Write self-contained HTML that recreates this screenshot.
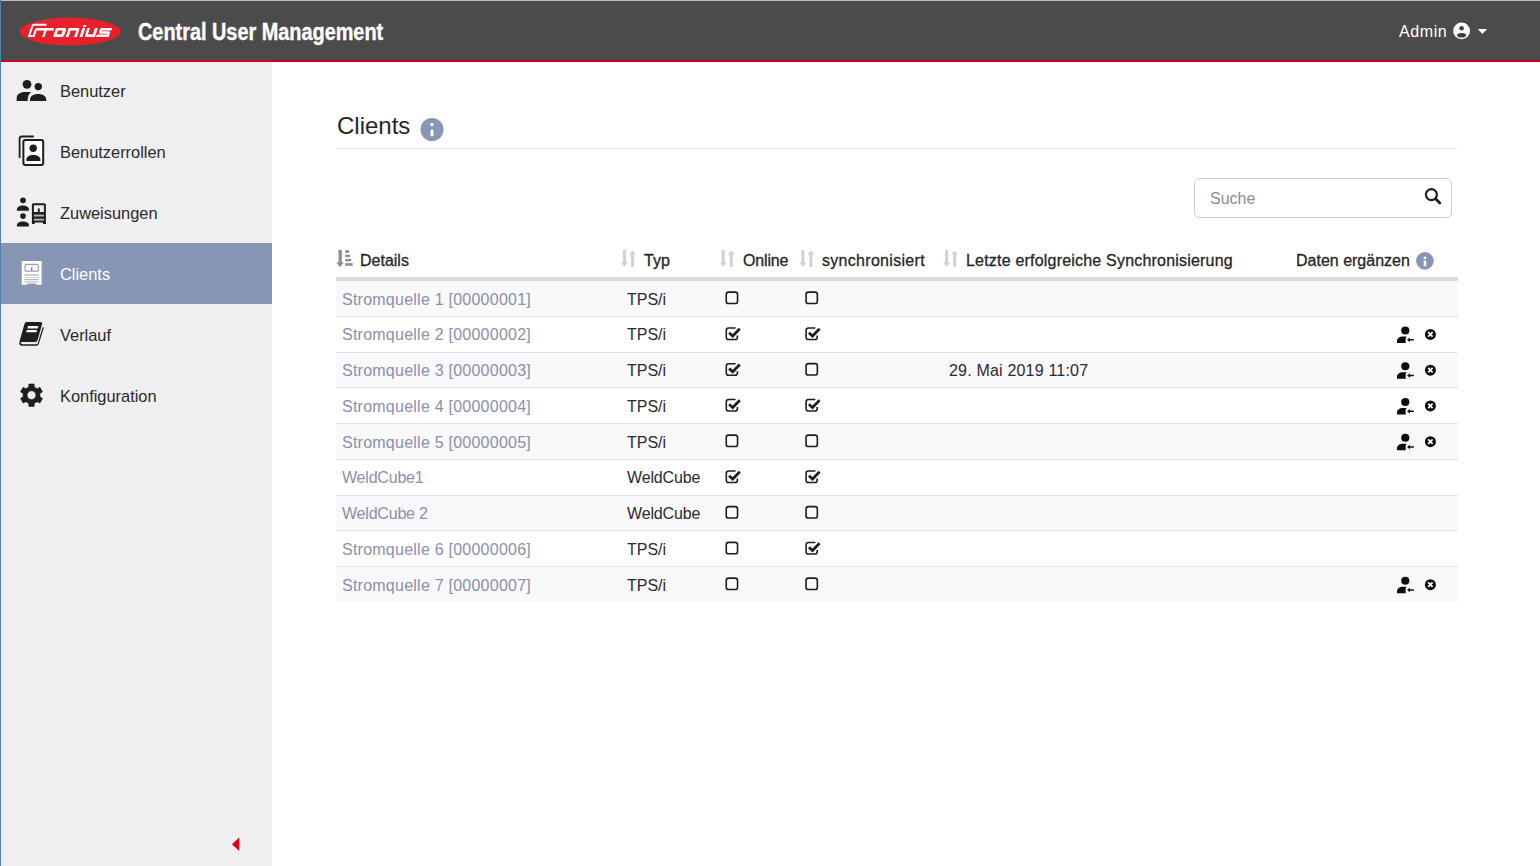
<!DOCTYPE html>
<html><head><meta charset="utf-8">
<style>
*{margin:0;padding:0;box-sizing:border-box}
html,body{width:1540px;height:866px;overflow:hidden;background:#fff;font-family:"Liberation Sans",sans-serif;color:#2b2b2b}
.abs{position:absolute}
.t{position:absolute;white-space:nowrap;line-height:1}
svg{position:absolute;overflow:visible}
.navtext{position:absolute;left:60px;font-size:16.4px;line-height:20px;color:#2a2a2a;white-space:nowrap}
.title{left:138px;top:19px;font-size:23px;font-weight:bold;color:#fff;white-space:nowrap;line-height:normal;transform-origin:0 0;transform:scaleX(0.864);-webkit-text-stroke:0.4px #fff}
.hdr{font-size:16px;color:#262626;-webkit-text-stroke:0.3px #262626}
.row{position:absolute;left:336px;width:1122px}
.odd{background:#f9f8fa}
.sep{position:absolute;left:336px;width:1122px;height:1px;background:#e2e1e5}
.lnk{color:#8a91a8;font-size:16px}
.cell{color:#2b2b2b;font-size:16px}
</style></head>
<body>
<div class="abs" style="left:0;top:0;width:1540px;height:1px;background:#bdbdbd"></div>
<div class="abs" style="left:0;top:1px;width:1540px;height:59px;background:#4b4b4c"></div>
<div class="abs" style="left:0;top:60px;width:1540px;height:2px;background:#c9061c"></div>
<div class="abs" style="left:0;top:62px;width:272px;height:804px;background:#efeef0"></div>
<div class="abs" style="left:0;top:243px;width:272px;height:61px;background:#8796b4"></div>
<div class="abs" style="left:0;top:0;width:1px;height:866px;background:#4f83ad"></div>
<svg style="left:0;top:0" width="130" height="60" viewBox="0 0 130 60">
<ellipse cx="70" cy="31.6" rx="50.5" ry="14" fill="#e8202a"/>
<g fill="#fff" transform="matrix(1,0,-0.33,1,12.21,0)">
<path d="M27.7 37 V25.8 Q27.7 23.8 29.7 23.8 H42.4 V25.8 H29.8 V35.1 H34.4 V37 Z"/>
<path d="M32.3 37 V30 Q32.3 28 34.3 28 H51.2 V30.4 H44.5 V37 H42.1 V30.4 H34.5 V37 Z"/>
<path fill-rule="evenodd" d="M55 28 H61.6 Q63.7 28 63.7 30.1 V34.9 Q63.7 37 61.6 37 H55 Q52.9 37 52.9 34.9 V30.1 Q52.9 28 55 28 Z M56 30.6 V34.3 H60.6 V30.6 Z"/>
<path d="M65.7 37 V28 H74.8 Q76.9 28 76.9 30.1 V37 H74.1 V30.6 H68.5 V37 Z"/>
<rect x="79.5" y="28" width="2.8" height="9"/>
<rect x="79.6" y="25.1" width="2.8" height="1.9"/>
<path d="M84.4 28 H87 V34.3 H92 V28 H94.9 V37 H86.5 Q84.4 37 84.4 34.9 Z"/>
<path d="M109.2 28 V30.4 H99.8 V31.3 H106.5 Q108.6 31.3 108.6 33.4 V37 H96 V34.6 H106 V33.7 H99.3 Q97.2 33.7 97.2 31.6 V30.1 Q97.2 28 99.3 28 Z"/>
</g>
</svg>
<div class="abs title">Central User Management</div>
<div class="t" style="left:1399px;top:24px;font-size:16px;color:#fff;letter-spacing:0.6px">Admin</div>
<svg style="left:1453px;top:22px" width="18" height="18" viewBox="0 0 18 18">
<circle cx="8.6" cy="8.9" r="8.4" fill="#fff"/>
<circle cx="8.6" cy="6.2" r="2.3" fill="#3a3f4a"/>
<ellipse cx="8.6" cy="13.2" rx="4.4" ry="2.3" fill="#3a3f4a"/>
</svg>
<svg style="left:1477px;top:28px" width="11" height="7" viewBox="0 0 11 7"><path d="M0.8 0.9 H10 L5.4 5.9 Z" fill="#fff"/></svg>
<div class="navtext" style="top:81px">Benutzer</div>
<div class="navtext" style="top:142px">Benutzerrollen</div>
<div class="navtext" style="top:203px">Zuweisungen</div>
<div class="navtext" style="top:264px;color:#fff">Clients</div>
<div class="navtext" style="top:325px">Verlauf</div>
<div class="navtext" style="top:386px">Konfiguration</div>
<svg style="left:0;top:0" width="60" height="430" viewBox="0 0 60 430">
<g fill="#1e1e1e">
<circle cx="27" cy="84.3" r="4.4"/>
<circle cx="38.3" cy="86.6" r="3.7"/>
<path d="M16.7 101 V98 C16.7 94.5 20 92 25 92 L31 92 C28.6 94 27.6 97 27.6 101 Z"/>
<path d="M30 101 V99.5 C30 96.2 33.5 94 38.1 94 C42.7 94 46.2 96.2 46.2 99.5 V101 Z"/>
</g>
<!-- Benutzerrollen -->
<g fill="none" stroke="#1e1e1e">
<path d="M19.6 158 V138.6 Q19.6 136.5 21.7 136.5 H33.8" stroke-width="1.8"/>
<rect x="23.4" y="140" width="19.8" height="25" rx="2" stroke-width="2" fill="#fff"/>
</g>
<g fill="#1e1e1e">
<circle cx="33.2" cy="148.3" r="3.7"/>
<path d="M26.3 161 V159.5 C26.3 156.8 29.3 155 33.3 155 C37.3 155 40.4 156.8 40.4 159.5 V161 Z"/>
</g>
<!-- Zuweisungen -->
<g fill="#1e1e1e">
<circle cx="23" cy="200.3" r="2.9"/>
<path d="M16.9 210.7 V209.5 C16.9 207.2 19.5 205.6 22.9 205.6 C26.3 205.6 28.9 207.2 28.9 209.5 V210.7 Z"/>
<circle cx="23" cy="216.1" r="2.8"/>
<path d="M16.9 226.4 V225.2 C16.9 222.9 19.5 221.6 22.9 221.6 C26.3 221.6 28.9 222.9 28.9 225.2 V226.4 Z"/>
<path fill-rule="evenodd" d="M33.4 203.3 H44.4 Q45.9 203.3 45.9 204.8 V223.9 H43 V222.6 H34.8 V223.9 H31.9 V204.8 Q31.9 203.3 33.4 203.3 Z M33.9 205.3 V211.9 H43.9 V205.3 Z"/>
<rect x="33.9" y="214.6" width="10" height="1.9" fill="#b8b8b8"/>
<rect x="33.9" y="218.7" width="10" height="1.9" fill="#b8b8b8"/>
<rect x="37.8" y="208.5" width="2" height="3.4"/>
</g>
<!-- Clients (white) -->
<g>
<path d="M21.7 260.9 H41.6 V284.7 H36 V283.5 H27.2 V284.7 H21.7 Z" fill="#fff"/>
<rect x="25" y="264.4" width="13.3" height="6.8" rx="1" fill="#fff" stroke="#9aa3b8" stroke-width="1.2"/>
<rect x="31" y="267.6" width="1.4" height="3" fill="#6f7890"/>
<rect x="24.5" y="274.3" width="14.3" height="1.4" fill="#b3b8c8"/>
<rect x="24.5" y="277" width="14.3" height="0.9" fill="#c3c8d4"/>
<rect x="24.5" y="279.2" width="14.3" height="0.9" fill="#a0a6b8"/>
<rect x="24.5" y="281" width="14.3" height="1.4" fill="#c3c8d4"/>
</g>
<!-- Verlauf book -->
<g fill="#1e1e1e">
<path d="M26.5 322 H40.3 Q42.6 322 42 324.3 L37.6 340.2 Q37.1 342 35.2 342 H20.2 Q19.4 342 19.6 341 L24.6 323.5 Q25 322 26.5 322 Z"/>
<path d="M19.6 341.5 Q18.6 345.8 22 345.8 H36.5 Q38.3 345.8 38.8 344 L43.9 327.5 L42.6 327.2 L37.8 343.3 Q37.5 344.2 36.4 344.2 H22.3 Q20.8 344.2 21.2 342.6 Z"/>
</g>
<g fill="#fff">
<path d="M28 326.1 H38.3 L37.7 328.4 H27.4 Z"/>
<path d="M26.8 330 H37 L36.4 332.3 H26.2 Z"/>
</g>
</svg>
<svg style="left:0;top:0" width="60" height="430" viewBox="0 0 60 430"><path d="M28.70 387.07 L28.91 383.99 L34.09 383.99 L34.30 387.07 L37.14 388.71 L39.91 387.36 L42.50 391.84 L39.94 393.56 L39.94 396.84 L42.50 398.56 L39.91 403.04 L37.14 401.69 L34.30 403.33 L34.09 406.41 L28.91 406.41 L28.70 403.33 L25.86 401.69 L23.09 403.04 L20.50 398.56 L23.06 396.84 L23.06 393.56 L20.50 391.84 L23.09 387.36 L25.86 388.71 Z M35.90 395.2 A4.4 4.4 0 1 0 27.10 395.2 A4.4 4.4 0 1 0 35.90 395.2 Z" fill="#1e1e1e" fill-rule="evenodd" stroke="#1e1e1e" stroke-width="0.6" stroke-linejoin="round"/></svg>
<svg style="left:0;top:0" width="272" height="866" viewBox="0 0 272 866"><path d="M231.9 844.3 L239.3 837.5 V851 Z" fill="#d8001a"/></svg>
<div class="t" style="left:337px;top:114px;font-size:24px;color:#262626">Clients</div>
<svg style="left:420px;top:118px" width="24" height="24" viewBox="0 0 24 24"><circle cx="12" cy="11.5" r="11.5" fill="#8796b4"/><rect x="10.5" y="5" width="3" height="3" rx="0.6" fill="#fff"/><rect x="10.5" y="11.5" width="3" height="6.6" fill="#fff"/></svg>
<div class="abs" style="left:336px;top:148px;width:1122px;height:1px;background:#e9e8ec"></div>
<div class="abs" style="left:1194px;top:178px;width:258px;height:40px;border:1px solid #cdcdcd;border-radius:5px;background:#fff"></div>
<div class="t" style="left:1210px;top:191px;font-size:16px;color:#8c8c8c">Suche</div>
<svg style="left:1418px;top:183px" width="28" height="26" viewBox="0 0 28 26"><circle cx="13.4" cy="11.6" r="5.5" fill="none" stroke="#1e1e1e" stroke-width="2.2"/><path d="M17.6 15.8 L21.8 20" stroke="#1e1e1e" stroke-width="2.8" stroke-linecap="round"/></svg>
<div class="row odd" style="top:281px;height:35px"></div>
<div class="row" style="top:317px;height:35px"></div>
<div class="row odd" style="top:353px;height:34px"></div>
<div class="row" style="top:388px;height:35px"></div>
<div class="row odd" style="top:424px;height:35px"></div>
<div class="row" style="top:460px;height:35px"></div>
<div class="row odd" style="top:496px;height:34px"></div>
<div class="row" style="top:531px;height:35px"></div>
<div class="row odd" style="top:567px;height:35px"></div>
<div class="sep" style="top:316px"></div>
<div class="sep" style="top:352px"></div>
<div class="sep" style="top:387px"></div>
<div class="sep" style="top:423px"></div>
<div class="sep" style="top:459px"></div>
<div class="sep" style="top:495px"></div>
<div class="sep" style="top:530px"></div>
<div class="sep" style="top:566px"></div>
<div class="abs" style="left:336px;top:277px;width:1122px;height:4px;background:#dadada"></div>
<div class="t hdr" style="left:360px;top:253px;letter-spacing:0px">Details</div>
<div class="t hdr" style="left:644px;top:253px;letter-spacing:0px">Typ</div>
<div class="t hdr" style="left:743px;top:253px;letter-spacing:-0.15px">Online</div>
<div class="t hdr" style="left:822px;top:253px;letter-spacing:0.3px">synchronisiert</div>
<div class="t hdr" style="left:966px;top:253px;letter-spacing:0.2px">Letzte erfolgreiche Synchronisierung</div>
<div class="t hdr" style="left:1296px;top:253px;letter-spacing:0px">Daten ergänzen</div>
<svg style="left:0;top:0" width="1540" height="300" viewBox="0 0 1540 300">
<g fill="#8f8f8f">
<rect x="338.5" y="249.9" width="3.4" height="13.5"/>
<path d="M336.2 262.6 H343.9 L340.05 267 Z"/>
<rect x="345.2" y="250.2" width="3.9" height="2.7"/>
<rect x="345.2" y="254.7" width="4.8" height="2.4"/>
<rect x="345.2" y="258.9" width="6" height="2.4"/>
<rect x="345.2" y="263.1" width="7.5" height="2.7"/>
</g>
<g fill="#d2d2d2" transform="translate(0.0,0)">
<rect x="622.9" y="250" width="3.1" height="13"/>
<path d="M620.8 262.6 H628 L624.4 266.8 Z"/>
<rect x="631" y="254.5" width="3" height="12.5"/>
<path d="M629 254.8 H636 L632.5 250.4 Z"/>
</g>
<g fill="#d2d2d2" transform="translate(98.80000000000007,0)">
<rect x="622.9" y="250" width="3.1" height="13"/>
<path d="M620.8 262.6 H628 L624.4 266.8 Z"/>
<rect x="631" y="254.5" width="3" height="12.5"/>
<path d="M629 254.8 H636 L632.5 250.4 Z"/>
</g>
<g fill="#d2d2d2" transform="translate(178.4000000000001,0)">
<rect x="622.9" y="250" width="3.1" height="13"/>
<path d="M620.8 262.6 H628 L624.4 266.8 Z"/>
<rect x="631" y="254.5" width="3" height="12.5"/>
<path d="M629 254.8 H636 L632.5 250.4 Z"/>
</g>
<g fill="#d2d2d2" transform="translate(322.20000000000005,0)">
<rect x="622.9" y="250" width="3.1" height="13"/>
<path d="M620.8 262.6 H628 L624.4 266.8 Z"/>
<rect x="631" y="254.5" width="3" height="12.5"/>
<path d="M629 254.8 H636 L632.5 250.4 Z"/>
</g>
<circle cx="1424.9" cy="260.9" r="8.8" fill="#8796b4"/>
<rect x="1423.7" y="256.6" width="2.5" height="2.5" fill="#fff"/>
<rect x="1423.7" y="260.6" width="2.5" height="5.6" fill="#fff"/>
</svg>
<div class="t lnk" style="left:342px;top:292px;letter-spacing:0.24px">Stromquelle 1 [00000001]</div>
<div class="t cell" style="left:627px;top:292px;letter-spacing:0px">TPS/i</div>
<div class="t lnk" style="left:342px;top:327px;letter-spacing:0.24px">Stromquelle 2 [00000002]</div>
<div class="t cell" style="left:627px;top:327px;letter-spacing:0px">TPS/i</div>
<div class="t lnk" style="left:342px;top:363px;letter-spacing:0.24px">Stromquelle 3 [00000003]</div>
<div class="t cell" style="left:627px;top:363px;letter-spacing:0px">TPS/i</div>
<div class="t cell" style="left:949px;top:363px;letter-spacing:0.19px">29. Mai 2019 11:07</div>
<div class="t lnk" style="left:342px;top:399px;letter-spacing:0.24px">Stromquelle 4 [00000004]</div>
<div class="t cell" style="left:627px;top:399px;letter-spacing:0px">TPS/i</div>
<div class="t lnk" style="left:342px;top:435px;letter-spacing:0.24px">Stromquelle 5 [00000005]</div>
<div class="t cell" style="left:627px;top:435px;letter-spacing:0px">TPS/i</div>
<div class="t lnk" style="left:342px;top:470px;letter-spacing:-0.2px">WeldCube1</div>
<div class="t cell" style="left:627px;top:470px;letter-spacing:-0.15px">WeldCube</div>
<div class="t lnk" style="left:342px;top:506px;letter-spacing:-0.2px">WeldCube 2</div>
<div class="t cell" style="left:627px;top:506px;letter-spacing:-0.15px">WeldCube</div>
<div class="t lnk" style="left:342px;top:542px;letter-spacing:0.24px">Stromquelle 6 [00000006]</div>
<div class="t cell" style="left:627px;top:542px;letter-spacing:0px">TPS/i</div>
<div class="t lnk" style="left:342px;top:578px;letter-spacing:0.24px">Stromquelle 7 [00000007]</div>
<div class="t cell" style="left:627px;top:578px;letter-spacing:0px">TPS/i</div>
<svg style="left:0;top:0" width="1540" height="866" viewBox="0 0 1540 866">
<rect x="726.25" y="292.15" width="11.3" height="11.4" rx="2.4" fill="none" stroke="#1e1e1e" stroke-width="1.6"/>
<rect x="806.05" y="292.15" width="11.3" height="11.4" rx="2.4" fill="none" stroke="#1e1e1e" stroke-width="1.6"/>
<path d="M735.7 327.95 H728.6 Q726.3 327.95 726.3 330.25 V0" fill="none"/><path transform="translate(725.5,327.15)" d="M10.1 0.8 H3.1 Q0.8 0.8 0.8 3.1 V10.1 Q0.8 12.4 3.1 12.4 H9.6 Q11.9 12.4 11.9 10.1 V8.4" fill="none" stroke="#1e1e1e" stroke-width="1.6"/><path transform="translate(725.5,327.15)" d="M3.6 5.6 L7.2 8.9 L14.3 1.6" fill="none" stroke="#1e1e1e" stroke-width="2.7"/>
<path d="M815.5 327.95 H808.4 Q806.0999999999999 327.95 806.0999999999999 330.25 V0" fill="none"/><path transform="translate(805.3,327.15)" d="M10.1 0.8 H3.1 Q0.8 0.8 0.8 3.1 V10.1 Q0.8 12.4 3.1 12.4 H9.6 Q11.9 12.4 11.9 10.1 V8.4" fill="none" stroke="#1e1e1e" stroke-width="1.6"/><path transform="translate(805.3,327.15)" d="M3.6 5.6 L7.2 8.9 L14.3 1.6" fill="none" stroke="#1e1e1e" stroke-width="2.7"/>
<g transform="translate(0,0.00)" fill="#0d0d0d"><circle cx="1405.3" cy="330.5" r="4.1"/><path d="M1397 343 V341 C1397 338.5 1399.5 336.6 1403 336.6 H1406.6 C1405.6 338 1405.4 340 1405.8 343 Z"/><path d="M1407 339.8 L1410 337.6 V339.1 H1413.8 V340.5 H1410 V342 Z"/><circle cx="1430.4" cy="334.4" r="5.5"/><path d="M1428.2 332.2 L1432.6 336.6 M1432.6 332.2 L1428.2 336.6" stroke="#fff" stroke-width="1.7"/></g>
<path d="M735.7 363.7 H728.6 Q726.3 363.7 726.3 366.0 V0" fill="none"/><path transform="translate(725.5,362.9)" d="M10.1 0.8 H3.1 Q0.8 0.8 0.8 3.1 V10.1 Q0.8 12.4 3.1 12.4 H9.6 Q11.9 12.4 11.9 10.1 V8.4" fill="none" stroke="#1e1e1e" stroke-width="1.6"/><path transform="translate(725.5,362.9)" d="M3.6 5.6 L7.2 8.9 L14.3 1.6" fill="none" stroke="#1e1e1e" stroke-width="2.7"/>
<rect x="806.05" y="363.65" width="11.3" height="11.4" rx="2.4" fill="none" stroke="#1e1e1e" stroke-width="1.6"/>
<g transform="translate(0,35.75)" fill="#0d0d0d"><circle cx="1405.3" cy="330.5" r="4.1"/><path d="M1397 343 V341 C1397 338.5 1399.5 336.6 1403 336.6 H1406.6 C1405.6 338 1405.4 340 1405.8 343 Z"/><path d="M1407 339.8 L1410 337.6 V339.1 H1413.8 V340.5 H1410 V342 Z"/><circle cx="1430.4" cy="334.4" r="5.5"/><path d="M1428.2 332.2 L1432.6 336.6 M1432.6 332.2 L1428.2 336.6" stroke="#fff" stroke-width="1.7"/></g>
<path d="M735.7 399.45 H728.6 Q726.3 399.45 726.3 401.75 V0" fill="none"/><path transform="translate(725.5,398.65)" d="M10.1 0.8 H3.1 Q0.8 0.8 0.8 3.1 V10.1 Q0.8 12.4 3.1 12.4 H9.6 Q11.9 12.4 11.9 10.1 V8.4" fill="none" stroke="#1e1e1e" stroke-width="1.6"/><path transform="translate(725.5,398.65)" d="M3.6 5.6 L7.2 8.9 L14.3 1.6" fill="none" stroke="#1e1e1e" stroke-width="2.7"/>
<path d="M815.5 399.45 H808.4 Q806.0999999999999 399.45 806.0999999999999 401.75 V0" fill="none"/><path transform="translate(805.3,398.65)" d="M10.1 0.8 H3.1 Q0.8 0.8 0.8 3.1 V10.1 Q0.8 12.4 3.1 12.4 H9.6 Q11.9 12.4 11.9 10.1 V8.4" fill="none" stroke="#1e1e1e" stroke-width="1.6"/><path transform="translate(805.3,398.65)" d="M3.6 5.6 L7.2 8.9 L14.3 1.6" fill="none" stroke="#1e1e1e" stroke-width="2.7"/>
<g transform="translate(0,71.50)" fill="#0d0d0d"><circle cx="1405.3" cy="330.5" r="4.1"/><path d="M1397 343 V341 C1397 338.5 1399.5 336.6 1403 336.6 H1406.6 C1405.6 338 1405.4 340 1405.8 343 Z"/><path d="M1407 339.8 L1410 337.6 V339.1 H1413.8 V340.5 H1410 V342 Z"/><circle cx="1430.4" cy="334.4" r="5.5"/><path d="M1428.2 332.2 L1432.6 336.6 M1432.6 332.2 L1428.2 336.6" stroke="#fff" stroke-width="1.7"/></g>
<rect x="726.25" y="435.15" width="11.3" height="11.4" rx="2.4" fill="none" stroke="#1e1e1e" stroke-width="1.6"/>
<rect x="806.05" y="435.15" width="11.3" height="11.4" rx="2.4" fill="none" stroke="#1e1e1e" stroke-width="1.6"/>
<g transform="translate(0,107.25)" fill="#0d0d0d"><circle cx="1405.3" cy="330.5" r="4.1"/><path d="M1397 343 V341 C1397 338.5 1399.5 336.6 1403 336.6 H1406.6 C1405.6 338 1405.4 340 1405.8 343 Z"/><path d="M1407 339.8 L1410 337.6 V339.1 H1413.8 V340.5 H1410 V342 Z"/><circle cx="1430.4" cy="334.4" r="5.5"/><path d="M1428.2 332.2 L1432.6 336.6 M1432.6 332.2 L1428.2 336.6" stroke="#fff" stroke-width="1.7"/></g>
<path d="M735.7 470.95 H728.6 Q726.3 470.95 726.3 473.25 V0" fill="none"/><path transform="translate(725.5,470.15)" d="M10.1 0.8 H3.1 Q0.8 0.8 0.8 3.1 V10.1 Q0.8 12.4 3.1 12.4 H9.6 Q11.9 12.4 11.9 10.1 V8.4" fill="none" stroke="#1e1e1e" stroke-width="1.6"/><path transform="translate(725.5,470.15)" d="M3.6 5.6 L7.2 8.9 L14.3 1.6" fill="none" stroke="#1e1e1e" stroke-width="2.7"/>
<path d="M815.5 470.95 H808.4 Q806.0999999999999 470.95 806.0999999999999 473.25 V0" fill="none"/><path transform="translate(805.3,470.15)" d="M10.1 0.8 H3.1 Q0.8 0.8 0.8 3.1 V10.1 Q0.8 12.4 3.1 12.4 H9.6 Q11.9 12.4 11.9 10.1 V8.4" fill="none" stroke="#1e1e1e" stroke-width="1.6"/><path transform="translate(805.3,470.15)" d="M3.6 5.6 L7.2 8.9 L14.3 1.6" fill="none" stroke="#1e1e1e" stroke-width="2.7"/>
<rect x="726.25" y="506.65" width="11.3" height="11.4" rx="2.4" fill="none" stroke="#1e1e1e" stroke-width="1.6"/>
<rect x="806.05" y="506.65" width="11.3" height="11.4" rx="2.4" fill="none" stroke="#1e1e1e" stroke-width="1.6"/>
<rect x="726.25" y="542.4" width="11.3" height="11.4" rx="2.4" fill="none" stroke="#1e1e1e" stroke-width="1.6"/>
<path d="M815.5 542.4499999999999 H808.4 Q806.0999999999999 542.4499999999999 806.0999999999999 544.75 V0" fill="none"/><path transform="translate(805.3,541.65)" d="M10.1 0.8 H3.1 Q0.8 0.8 0.8 3.1 V10.1 Q0.8 12.4 3.1 12.4 H9.6 Q11.9 12.4 11.9 10.1 V8.4" fill="none" stroke="#1e1e1e" stroke-width="1.6"/><path transform="translate(805.3,541.65)" d="M3.6 5.6 L7.2 8.9 L14.3 1.6" fill="none" stroke="#1e1e1e" stroke-width="2.7"/>
<rect x="726.25" y="578.15" width="11.3" height="11.4" rx="2.4" fill="none" stroke="#1e1e1e" stroke-width="1.6"/>
<rect x="806.05" y="578.15" width="11.3" height="11.4" rx="2.4" fill="none" stroke="#1e1e1e" stroke-width="1.6"/>
<g transform="translate(0,250.25)" fill="#0d0d0d"><circle cx="1405.3" cy="330.5" r="4.1"/><path d="M1397 343 V341 C1397 338.5 1399.5 336.6 1403 336.6 H1406.6 C1405.6 338 1405.4 340 1405.8 343 Z"/><path d="M1407 339.8 L1410 337.6 V339.1 H1413.8 V340.5 H1410 V342 Z"/><circle cx="1430.4" cy="334.4" r="5.5"/><path d="M1428.2 332.2 L1432.6 336.6 M1432.6 332.2 L1428.2 336.6" stroke="#fff" stroke-width="1.7"/></g>
</svg>
</body></html>
